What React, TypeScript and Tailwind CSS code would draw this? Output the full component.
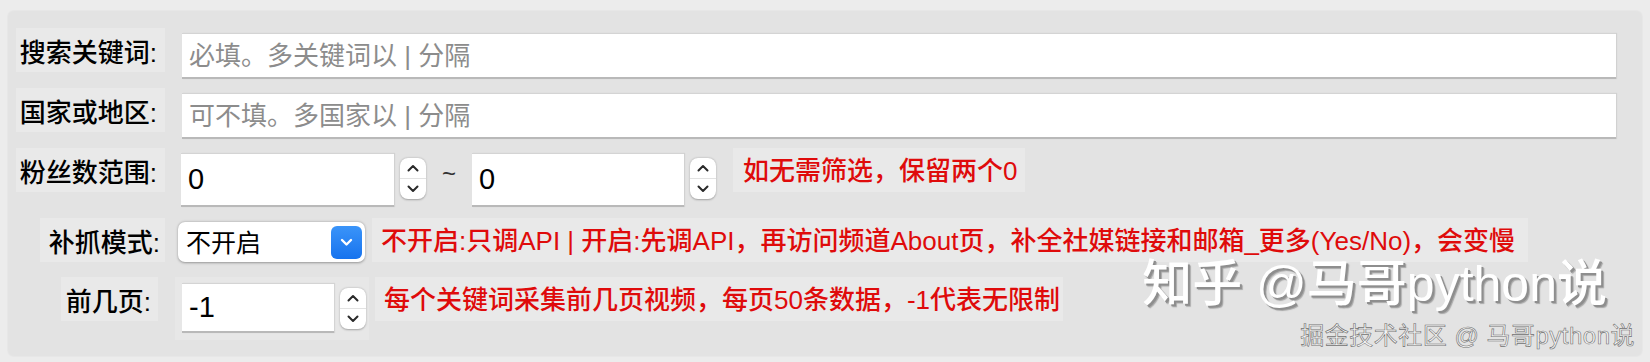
import React from 'react'

const font = "font-['Liberation_Sans','Noto_Sans_CJK_SC',sans-serif]"

function Spinner({ className = '' }: { className?: string }) {
  return (
    <div className={`flex flex-col w-[26px] h-[41px] bg-white rounded-[8px] shadow-[0_0.5px_2px_rgba(0,0,0,0.3)] ${className}`}>
      <div className="flex-1 flex items-center justify-center border-b border-[#e2e2e2]">
        <svg width="12" height="8" viewBox="0 0 12 8" fill="none">
          <path d="M1.5 6.5 L6 2 L10.5 6.5" stroke="#2a2a2a" strokeWidth="2" strokeLinecap="round" strokeLinejoin="round" />
        </svg>
      </div>
      <div className="flex-1 flex items-center justify-center">
        <svg width="12" height="8" viewBox="0 0 12 8" fill="none">
          <path d="M1.5 1.5 L6 6 L10.5 1.5" stroke="#2a2a2a" strokeWidth="2" strokeLinecap="round" strokeLinejoin="round" />
        </svg>
      </div>
    </div>
  )
}

function Label({ text, className }: { text: string; className: string }) {
  return (
    <div className={`h-[44px] bg-[#e9e9e9] flex items-center justify-end pt-[5px] text-[26px] leading-none font-medium text-black ${className}`}>
      {text}
    </div>
  )
}

function Hint({ text, className }: { text: string; className: string }) {
  return (
    <div className={`h-[44px] bg-[#e9e9e9] flex items-center pt-[2px] text-[26px] leading-none font-medium text-[#df0b0b] whitespace-nowrap ${className}`}>
      {text}
    </div>
  )
}

const field = 'bg-white border-t border-[#d4d4d4] border-b-2 border-b-[#b9b9b9] shadow-[1px_0_1px_rgba(0,0,0,0.08)]'

export default function App() {
  return (
    <div className={`w-[1650px] h-[362px] bg-[#ececec] pt-[10px] px-[7px] ${font}`}>
      <div className="relative h-[347px] bg-[#e3e3e3] rounded-[6px] pt-[18px] shadow-[inset_0_0_2px_rgba(255,255,255,0.6)]">
        {/* 搜索关键词 */}
        <div className="flex items-start h-[60px]">
          <Label text="搜索关键词:" className="ml-[9px] w-[149px] pr-[8px]" />
          <div className={`ml-[17px] mt-[5px] w-[1434px] h-[46px] flex items-center pl-[7px] pt-[2px] text-[26px] text-[#8c8c8c] ${field}`}>
            必填。多关键词以 | 分隔
          </div>
        </div>

        {/* 国家或地区 */}
        <div className="flex items-start h-[60px]">
          <Label text="国家或地区:" className="ml-[9px] w-[149px] pr-[8px]" />
          <div className={`ml-[17px] mt-[5px] w-[1434px] h-[46px] flex items-center pl-[7px] pt-[2px] text-[26px] text-[#8c8c8c] ${field}`}>
            可不填。多国家以 | 分隔
          </div>
        </div>

        {/* 粉丝数范围 */}
        <div className="flex items-start h-[70px]">
          <Label text="粉丝数范围:" className="ml-[9px] w-[149px] pr-[8px]" />
          <div className={`ml-[16px] mt-[5px] w-[213px] h-[54px] flex items-center pl-[7px] text-[29px] text-black ${field}`}>0</div>
          <Spinner className="ml-[6px] mt-[10px]" />
          <div className="ml-[16px] mt-[14px] w-[18px] text-[24px] text-[#333] leading-none">~</div>
          <div className={`ml-[12px] mt-[5px] w-[212px] h-[54px] flex items-center pl-[7px] text-[29px] text-black ${field}`}>0</div>
          <Spinner className="ml-[6px] mt-[10px]" />
          <Hint text="如无需筛选，保留两个0" className="ml-[17px] w-[292px] pl-[10px]" />
        </div>

        {/* 补抓模式 */}
        <div className="flex items-start h-[59px]">
          <Label text="补抓模式:" className="ml-[33px] w-[125px] pr-[5px]" />
          <div className="ml-[13px] mt-[4px] w-[187px] h-[40px] bg-white rounded-[7px] shadow-[0_0.5px_2.5px_rgba(0,0,0,0.35)] flex items-center justify-between pl-[8px] pr-[3px]">
            <span className="text-[25px] leading-none text-black pt-[3px]">不开启</span>
            <div className="w-[31px] h-[33px] rounded-[6px] bg-gradient-to-b from-[#3a94f9] to-[#1673ee] flex items-center justify-center">
              <svg width="13" height="9" viewBox="0 0 13 9" fill="none">
                <path d="M2 2 L6.5 6.5 L11 2" stroke="white" strokeWidth="2.4" strokeLinecap="round" strokeLinejoin="round" />
              </svg>
            </div>
          </div>
          <Hint text="不开启:只调API | 开启:先调API，再访问频道About页，补全社媒链接和邮箱_更多(Yes/No)，会变慢" className="ml-[7px] w-[1156px] pl-[9px]" />
        </div>

        {/* 前几页 */}
        <div className="flex items-start h-[63px]">
          <Label text="前几页:" className="ml-[54px] w-[97px] pr-[7px]" />
          <div className="ml-[17px] w-[194px] h-[63px] bg-[#e7e7e7] flex items-start">
            <div className={`ml-[7px] mt-[6px] w-[152px] h-[50px] flex items-center pl-[7px] text-[29px] text-black ${field}`}>-1</div>
            <Spinner className="ml-[6px] mt-[11px]" />
          </div>
          <Hint text="每个关键词采集前几页视频，每页50条数据，-1代表无限制" className="ml-[6px] w-[688px] pl-[9px]" />
        </div>

        {/* watermark */}
        <div className="absolute right-[36px] top-[249px] text-[50px] leading-none font-medium text-white whitespace-nowrap [text-shadow:2px_2px_0_#8e8e8e,3px_3px_1px_#a8a8a8]">
          知乎 @马哥python说
        </div>
        <div className="absolute right-[8px] top-[314px] text-[24px] tracking-[0.5px] leading-none text-[#f4f4f4] whitespace-nowrap [-webkit-text-stroke:0.6px_#6f6f6f]">
          掘金技术社区 @ 马哥python说
        </div>
      </div>
    </div>
  )
}
